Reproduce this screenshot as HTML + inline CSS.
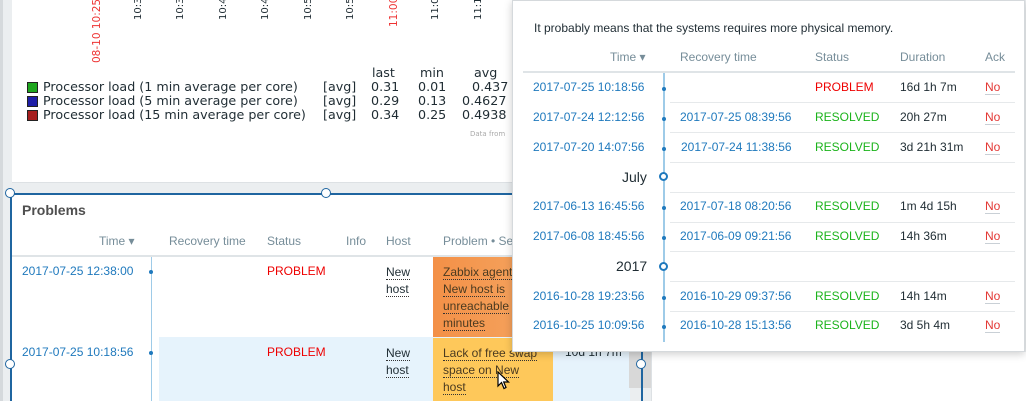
<!DOCTYPE html>
<html><head><style>
*{margin:0;padding:0;box-sizing:border-box}
html,body{width:1026px;height:401px;overflow:hidden}
body{background:#ebeef0;position:relative;font-family:"Liberation Sans",Arial,sans-serif;font-size:12px;color:#1f2c33}
.a{position:absolute;white-space:nowrap}
.dv{font-family:"DejaVu Sans",sans-serif}
.rot{position:absolute;transform-origin:left top;transform:rotate(-90deg);font-family:"DejaVu Sans",sans-serif;font-size:10px}
.lnk{color:#1f79bd}
.h{color:#768d99}
.red{color:#e00}
.grn{color:#1bb31b}
.no{color:#e33734;border-bottom:1px solid #c9d0d6}
.sep{position:absolute;height:1px;background:#e6e9eb}
.dot{position:absolute;width:4px;height:4px;border-radius:2px;background:#1f79bd}
.hc{position:absolute;width:10px;height:10px;border-radius:5px;border:1.5px solid #1f65a0;background:#fff}
.u{border-bottom:1px dotted #333}
</style></head><body>
<div class="a" style="left:0;top:0;width:3px;height:401px;background:#d5d9dc"></div>
<div class="a" style="left:12px;top:0;width:500px;height:183px;background:#fff;border-bottom:1px solid #dde1e4"></div>
<div class="rot" style="left:91px;top:63px;color:#e33;font-size:10.5px">08-10 10:25</div>
<div class="rot" style="left:133px;top:20px">10:30</div>
<div class="rot" style="left:175px;top:20px">10:35</div>
<div class="rot" style="left:218px;top:20px">10:40</div>
<div class="rot" style="left:260px;top:20px">10:45</div>
<div class="rot" style="left:303px;top:20px">10:50</div>
<div class="rot" style="left:345px;top:20px">10:55</div>
<div class="rot" style="left:388px;top:27px;color:#e33;font-size:10.5px">11:00</div>
<div class="rot" style="left:430px;top:20px">11:05</div>
<div class="rot" style="left:473px;top:20px">11:10</div>
<div class="a dv" style="left:0;top:66px;font-size:12.7px;line-height:14px">
<div class="a" style="left:372px;top:0">last</div><div class="a" style="left:420px;top:0">min</div><div class="a" style="left:474px;top:0">avg</div>
<div class="a" style="left:27px;top:16px;width:11px;height:11px;background:#1ea61e;border:1px solid #222"></div>
<div class="a" style="left:27px;top:30px;width:11px;height:11px;background:#1e1ea6;border:1px solid #222"></div>
<div class="a" style="left:27px;top:44px;width:11px;height:11px;background:#a61e1e;border:1px solid #222"></div>
<div class="a" style="left:43px;top:14px">Processor load (1 min average per core)</div>
<div class="a" style="left:43px;top:28px">Processor load (5 min average per core)</div>
<div class="a" style="left:43px;top:42px">Processor load (15 min average per core)</div>
<div class="a" style="left:323px;top:14px">[avg]</div><div class="a" style="left:323px;top:28px">[avg]</div><div class="a" style="left:323px;top:42px">[avg]</div>
<div class="a" style="left:371px;top:14px">0.31</div><div class="a" style="left:371px;top:28px">0.29</div><div class="a" style="left:371px;top:42px">0.34</div>
<div class="a" style="left:418px;top:14px">0.01</div><div class="a" style="left:418px;top:28px">0.13</div><div class="a" style="left:418px;top:42px">0.25</div>
<div class="a" style="left:472px;top:14px">0.437</div><div class="a" style="left:462px;top:28px">0.4627</div><div class="a" style="left:462px;top:42px">0.4938</div>
</div>
<div class="a dv" style="left:470px;top:130px;font-size:7px;color:#aaa">Data from</div>

<div class="a" style="left:10px;top:193px;width:502px;height:208px;background:#fff;border-left:2px solid #1f65a0;border-top:2px solid #1f65a0"></div>
<div class="hc" style="left:5px;top:188px"></div><div class="hc" style="left:321px;top:188px"></div><div class="hc" style="left:5px;top:359px"></div>
<div class="a" style="left:22px;top:202px;font-size:14px;font-weight:bold;color:#4f4f4f">Problems</div>
<div class="a h" style="left:99px;top:234px">Time ▾</div>
<div class="a h" style="left:169px;top:234px">Recovery time</div>
<div class="a h" style="left:267px;top:234px">Status</div>
<div class="a h" style="left:346px;top:234px">Info</div>
<div class="a h" style="left:386px;top:234px">Host</div>
<div class="a h" style="left:443px;top:234px">Problem • Se</div>
<div class="a" style="left:12px;top:255px;width:500px;height:2px;background:#dfe4e7"></div>
<div class="a" style="left:159px;top:337px;width:471px;height:64px;background:#e6f3fc"></div>
<div class="a" style="left:151px;top:257px;width:1px;height:144px;background:#9ecbe8"></div>
<div class="a" style="left:433px;top:257px;width:80px;height:80px;background:linear-gradient(90deg,#f39047,#f5a05a)"></div>
<div class="a" style="left:433px;top:338px;width:120px;height:63px;background:#fec85a"></div>
<div class="a" style="left:629px;top:352px;width:22px;height:36px;background:#d8d8d8"></div>
<div class="a lnk" style="left:22px;top:264px">2017-07-25 12:38:00</div>
<div class="dot" style="left:149px;top:270px"></div>
<div class="a red" style="left:267px;top:264px">PROBLEM</div>
<div class="a" style="left:386px;top:264px;line-height:17px"><span class="u">New</span><br><span class="u">host</span></div>
<div class="a" style="left:443px;top:264px;line-height:17px;color:#4a3a20"><span class="u">Zabbix agent</span><br><span class="u">New host is</span><br><span class="u">unreachable</span><br><span class="u">minutes</span></div>
<div class="a lnk" style="left:22px;top:345px">2017-07-25 10:18:56</div>
<div class="dot" style="left:149px;top:351px"></div>
<div class="a red" style="left:267px;top:345px">PROBLEM</div>
<div class="a" style="left:386px;top:345px;line-height:17px"><span class="u">New</span><br><span class="u">host</span></div>
<div class="a" style="left:443px;top:345px;line-height:17px;color:#4a3a20"><span class="u">Lack of free swap</span><br><span class="u">space on New</span><br><span class="u">host</span></div>
<div class="a" style="left:565px;top:345px">10d 1h 7m</div>
<div class="a" style="left:641px;top:352px;width:2px;height:49px;background:#1f65a0"></div>
<div class="hc" style="left:636px;top:359px"></div>
<div class="a" style="left:651px;top:352px;width:375px;height:49px;background:#fff;border-left:1px solid #dde1e4"></div>

<div class="a" style="left:512px;top:0;width:513px;height:352px;background:#fff;border:1px solid #d5d9dc;box-shadow:0 2px 8px rgba(0,0,0,.2)"></div>
<div class="a" style="left:534px;top:21px">It probably means that the systems requires more physical memory.</div>
<div class="a h" style="left:610px;top:50px">Time ▾</div>
<div class="a h" style="left:680px;top:50px">Recovery time</div>
<div class="a h" style="left:815px;top:50px">Status</div>
<div class="a h" style="left:900px;top:50px">Duration</div>
<div class="a h" style="left:985px;top:50px">Ack</div>
<div class="a" style="left:523px;top:71px;width:492px;height:2px;background:#dfe4e7"></div>
<div class="a" style="left:663px;top:73px;width:2px;height:269px;background:#9ecbe8"></div>
<div class="sep" style="left:670px;top:102px;width:345px"></div>
<div class="sep" style="left:670px;top:132px;width:345px"></div>
<div class="sep" style="left:670px;top:162px;width:345px"></div>
<div class="sep" style="left:670px;top:192px;width:345px"></div>
<div class="sep" style="left:670px;top:222px;width:345px"></div>
<div class="sep" style="left:670px;top:251px;width:345px"></div>
<div class="sep" style="left:670px;top:281px;width:345px"></div>
<div class="sep" style="left:670px;top:311px;width:345px"></div>
<div class="a" style="left:0;top:0;font-size:12px">
<div class="a lnk" style="left:533px;top:80px">2017-07-25 10:18:56</div><div class="dot" style="left:662px;top:87px"></div>
<div class="a red" style="left:815px;top:80px">PROBLEM</div><div class="a" style="left:900px;top:80px">16d 1h 7m</div><div class="a no" style="left:985px;top:80px">No</div>
<div class="a lnk" style="left:533px;top:110px">2017-07-24 12:12:56</div><div class="dot" style="left:662px;top:117px"></div>
<div class="a lnk" style="left:680px;top:110px">2017-07-25 08:39:56</div>
<div class="a grn" style="left:815px;top:110px">RESOLVED</div><div class="a" style="left:900px;top:110px">20h 27m</div><div class="a no" style="left:985px;top:110px">No</div>
<div class="a lnk" style="left:533px;top:140px">2017-07-20 14:07:56</div><div class="dot" style="left:662px;top:147px"></div>
<div class="a lnk" style="left:681px;top:140px">2017-07-24 11:38:56</div>
<div class="a grn" style="left:815px;top:140px">RESOLVED</div><div class="a" style="left:900px;top:140px">3d 21h 31m</div><div class="a no" style="left:985px;top:140px">No</div>
<div class="a" style="left:622px;top:169px;font-size:14px">July</div><div class="hc" style="left:659px;top:172px;width:9px;height:9px;border:2px solid #1f79bd"></div>
<div class="a lnk" style="left:533px;top:199px">2017-06-13 16:45:56</div><div class="dot" style="left:662px;top:206px"></div>
<div class="a lnk" style="left:680px;top:199px">2017-07-18 08:20:56</div>
<div class="a grn" style="left:815px;top:199px">RESOLVED</div><div class="a" style="left:900px;top:199px">1m 4d 15h</div><div class="a no" style="left:985px;top:199px">No</div>
<div class="a lnk" style="left:533px;top:229px">2017-06-08 18:45:56</div><div class="dot" style="left:662px;top:236px"></div>
<div class="a lnk" style="left:680px;top:229px">2017-06-09 09:21:56</div>
<div class="a grn" style="left:815px;top:229px">RESOLVED</div><div class="a" style="left:900px;top:229px">14h 36m</div><div class="a no" style="left:985px;top:229px">No</div>
<div class="a" style="left:616px;top:258px;font-size:14px">2017</div><div class="hc" style="left:659px;top:262px;width:9px;height:9px;border:2px solid #1f79bd"></div>
<div class="a lnk" style="left:533px;top:289px">2016-10-28 19:23:56</div><div class="dot" style="left:662px;top:296px"></div>
<div class="a lnk" style="left:680px;top:289px">2016-10-29 09:37:56</div>
<div class="a grn" style="left:815px;top:289px">RESOLVED</div><div class="a" style="left:900px;top:289px">14h 14m</div><div class="a no" style="left:985px;top:289px">No</div>
<div class="a lnk" style="left:533px;top:318px">2016-10-25 10:09:56</div><div class="dot" style="left:662px;top:325px"></div>
<div class="a lnk" style="left:680px;top:318px">2016-10-28 15:13:56</div>
<div class="a grn" style="left:815px;top:318px">RESOLVED</div><div class="a" style="left:900px;top:318px">3d 5h 4m</div><div class="a no" style="left:985px;top:318px">No</div>
</div>
<svg class="a" style="left:497px;top:371px" width="14" height="20" viewBox="0 0 14 20"><path d="M1 1 L1 15 L4.5 11.5 L7 17.5 L9 16.5 L6.7 11 L11.5 11 Z" fill="#fff" stroke="#000" stroke-width="1.2"/></svg>
</body></html>
